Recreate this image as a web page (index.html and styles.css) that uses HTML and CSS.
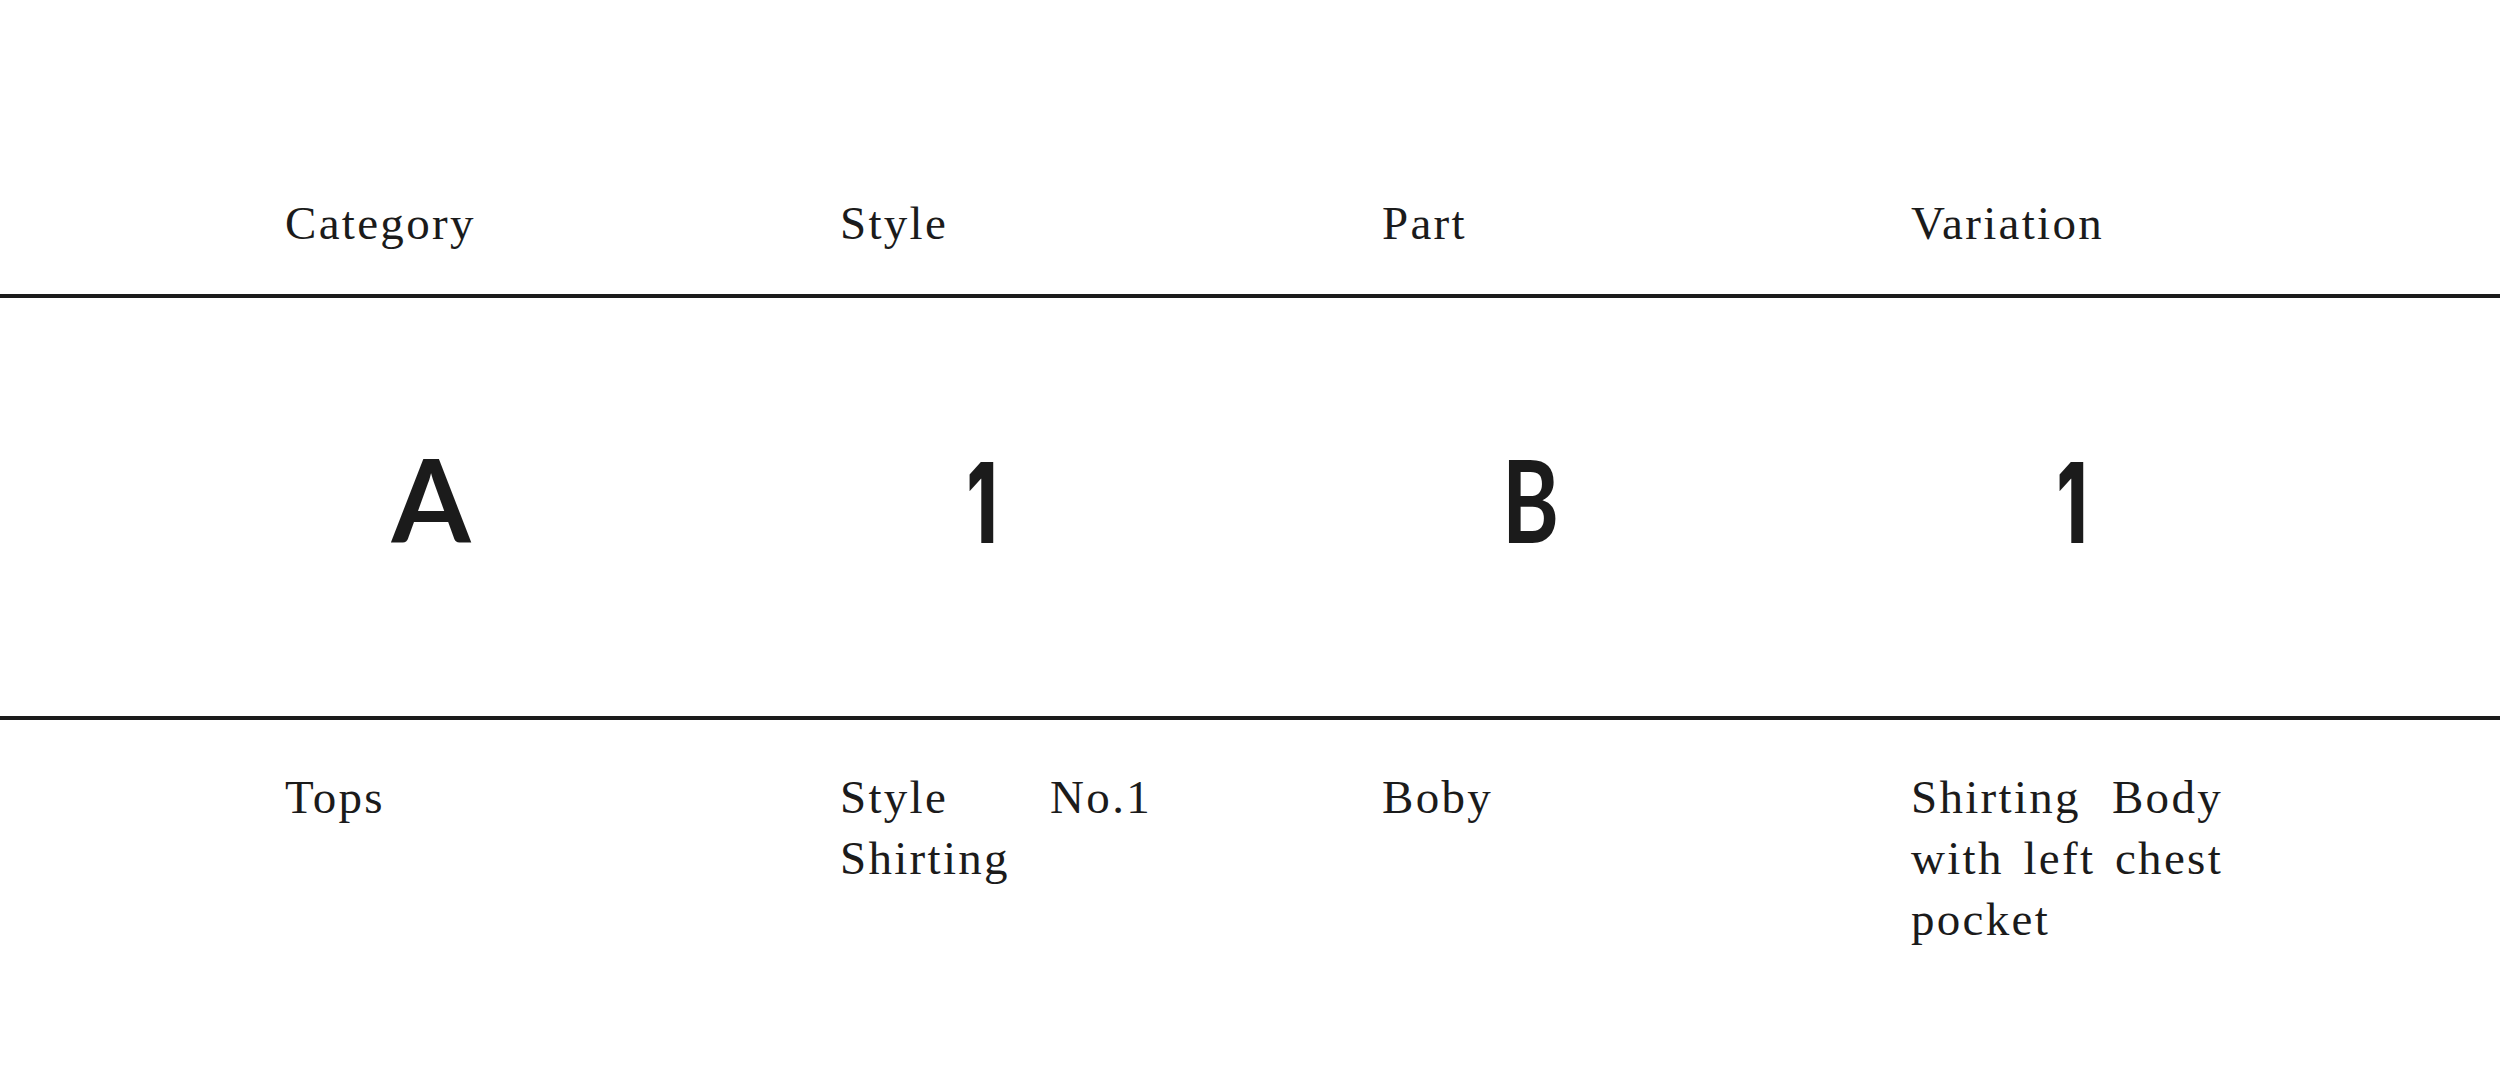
FILE: index.html
```html
<!DOCTYPE html>
<html lang="en">
<head>
<meta charset="utf-8">
<title>Code table</title>
<link rel="stylesheet" href="styles.css">
</head>
<body>
<div class="code-table">
  <div class="row head-row">
    <div class="cell label">Category</div>
    <div class="cell label">Style</div>
    <div class="cell label">Part</div>
    <div class="cell label">Variation</div>
  </div>
  <div class="row code-row">
    <div class="cell code code-cat"><span class="glyph glyph-a">A</span></div>
    <div class="cell code code-style"><span class="glyph glyph-one">1</span></div>
    <div class="cell code code-part"><span class="glyph glyph-b">B</span></div>
    <div class="cell code code-var"><span class="glyph glyph-one">1</span></div>
  </div>
  <div class="row desc-row">
    <div class="cell desc">Tops</div>
    <div class="cell desc">Style No.1 Shirting</div>
    <div class="cell desc">Boby</div>
    <div class="cell desc">Shirting Body with left chest pocket</div>
  </div>
</div>
</body>
</html>
```

FILE: styles.css
```css
html, body {
  margin: 0;
  padding: 0;
  background: #ffffff;
}

body {
  width: 2500px;
  height: 1090px;
  overflow: hidden;
  color: #1b1b1b;
  font-family: "Liberation Serif", "Times New Roman", serif;
}

.row {
  display: grid;
  grid-template-columns: 555px 542px 529px 1fr;
  padding-left: 285px;
}

.head-row {
  padding-top: 193px;
  padding-bottom: 41px;
  border-bottom: 4px solid #1b1b1b;
}

.code-row {
  box-sizing: border-box;
  height: 422px;
  padding-top: 141px;
  align-items: baseline;
  border-bottom: 4px solid #1b1b1b;
}

.desc-row {
  padding-top: 47px;
}

.label,
.desc {
  font-size: 47px;
  line-height: 61px;
  letter-spacing: 2.3px;
}

.label {
  line-height: 60px;
}

.desc {
  width: 312px;
  text-align: justify;
}

.code {
  display: flex;
  justify-content: center;
  align-items: baseline;
  line-height: 120px;
}

.code-cat { width: 292px; }
.code-style { width: 284px; }
.code-part { width: 297px; }
.code-var { width: 322px; }

.glyph {
  display: inline-block;
}

.glyph-a {
  font-family: Lato, "Noto Sans", sans-serif;
  font-weight: 700;
  font-size: 114px;
}

.glyph-one {
  font-family: Inter, "Liberation Sans", sans-serif;
  font-weight: 800;
  font-size: 112px;
  transform: scaleX(0.62);
}

.glyph-b {
  font-family: Lato, "Noto Sans", sans-serif;
  font-weight: 700;
  font-size: 114px;
  transform: scaleX(0.76);
}
```
